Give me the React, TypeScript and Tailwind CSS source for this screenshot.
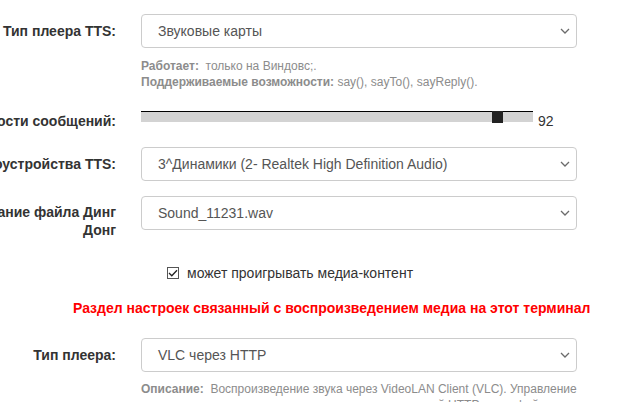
import React from 'react';

const font = { fontFamily: '"Liberation Sans", Arial, sans-serif' };

const Chevron = () => (
  <svg width="10" height="6" viewBox="0 0 10 6" className="shrink-0">
    <polyline points="1,1 5,5 9,1" fill="none" stroke="#6b6b6b" strokeWidth="1.3" />
  </svg>
);

const Select = ({ value }: { value: string }) => (
  <div className="flex h-[34px] w-[436px] items-center justify-between rounded-[4px] border border-[#cccccc] bg-white pl-[16px] pr-[6px] text-[14px] text-[#555555]">
    <span className="whitespace-nowrap">{value}</span>
    <Chevron />
  </div>
);

const Label = ({ children, wide }: { children: React.ReactNode; wide?: boolean }) => (
  <div className="flex w-[116px] shrink-0 justify-end">
    {wide ? (
      <div className="w-[160px] shrink-0 pt-[7px] text-right text-[14px] font-bold leading-[18px] text-[#333333]">
        {children}
      </div>
    ) : (
      <div className="shrink-0 whitespace-nowrap text-[14px] font-bold leading-[20px] text-[#333333]">
        {children}
      </div>
    )}
  </div>
);

const Row = ({ label, children, wide, center = true }: { label: React.ReactNode; children: React.ReactNode; wide?: boolean; center?: boolean }) => (
  <div className={`flex gap-[25px] ${center && !wide ? 'items-center' : 'items-start'}`}>
    <Label wide={wide}>{label}</Label>
    <div>{children}</div>
  </div>
);

export default function App() {
  const volume = 92;
  return (
    <div className="min-h-[402px] w-[619px] overflow-hidden bg-white pt-[14px]" style={font}>
      <Row label="Тип плеера TTS:">
        <Select value="Звуковые карты" />
      </Row>
      <div className="ml-[141px] mt-[10px] text-[12px] leading-[16px] text-[#8c8c8c]">
        <div>
          <b>Работает:</b>&nbsp; только на Виндовс;.
        </div>
        <div>
          <b>Поддерживаемые возможности:</b> say(), sayTo(), sayReply().
        </div>
      </div>

      <div className="mt-[21px] flex items-start gap-[25px]">
        <Label>Уровень громкости сообщений:</Label>
        <div className="flex items-start gap-[5px]">
          <div className="relative h-[11px] w-[392px] border-t border-black bg-[#d3d3d3]">
            <div
              className="absolute top-[-1px] h-[12px] w-[11px] bg-[#222222]"
              style={{ left: `${(volume / 100) * 381}px` }}
            />
          </div>
          <span className="text-[14px] leading-[20px] text-[#333333]">{volume}</span>
        </div>
      </div>

      <div className="mt-[16px]">
        <Row label="Аудиоустройства TTS:">
          <Select value="3^Динамики (2- Realtek High Definition Audio)" />
        </Row>
      </div>

      <div className="mt-[15px]">
        <Row label="Название файла Динг Донг" wide>
          <Select value="Sound_11231.wav" />
        </Row>
      </div>

      <div className="ml-[167px] mt-[24px] flex h-[20px] items-center gap-[8px] text-[14px] text-[#333333]">
        <span className="flex h-[12px] w-[12px] items-center justify-center border border-[#555555] bg-white">
          <svg width="10" height="8" viewBox="0 0 10 8">
            <polyline points="1,4 3.8,6.8 9,1.2" fill="none" stroke="#222" strokeWidth="1.3" />
          </svg>
        </span>
        <span>может проигрывать медиа-контент</span>
      </div>

      <div className="mt-[15px] whitespace-nowrap pl-[73px] text-[14px] font-bold leading-[20px] text-[#ff0000]">
        Раздел настроек связанный с воспроизведением медиа на этот терминал
      </div>

      <div className="mt-[20px]">
        <Row label="Тип плеера:">
          <Select value="VLC через HTTP" />
        </Row>
      </div>
      <div className="ml-[141px] mt-[9px] w-[436px] text-[12px] leading-[16px] text-[#8c8c8c]">
        <b>Описание:</b>&nbsp; Воспроизведение звука через VideoLAN Client (VLC). Управление
        воспроизведением осуществляется через встроенный HTTP-интерфейс плеера.
      </div>
    </div>
  );
}
